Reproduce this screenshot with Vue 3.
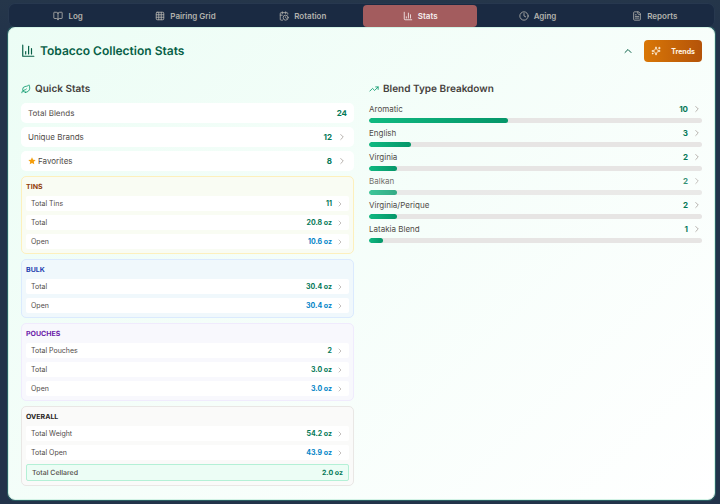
<script setup>
import { ref } from 'vue'

const icons = {
  book: '<path d="M12 7v14"/><path d="M3 18a1 1 0 0 1-1-1V4a1 1 0 0 1 1-1h5a4 4 0 0 1 4 4 4 4 0 0 1 4-4h5a1 1 0 0 1 1 1v13a1 1 0 0 1-1 1h-6a3 3 0 0 0-3 3 3 3 0 0 0-3-3z"/>',
  grid: '<rect width="18" height="18" x="3" y="3" rx="2"/><path d="M3 9h18"/><path d="M3 15h18"/><path d="M9 3v18"/><path d="M15 3v18"/>',
  calendar: '<path d="M21 7.5V6a2 2 0 0 0-2-2H5a2 2 0 0 0-2 2v14a2 2 0 0 0 2 2h3.5"/><path d="M16 2v4"/><path d="M8 2v4"/><path d="M3 10h5"/><path d="M17.5 17.5 16 16.3V14"/><circle cx="16" cy="16" r="6"/>',
  chart: '<path d="M3 3v16a2 2 0 0 0 2 2h16"/><path d="M18 17V9"/><path d="M13 17V5"/><path d="M8 17v-3"/>',
  bars: '<path d="M3 2v19h19"/><path d="M18 17V8"/><path d="M13 17V4"/><path d="M8 17v-4"/>',
  clock: '<circle cx="12" cy="12" r="10"/><path d="M12 6v6l4 2"/>',
  file: '<path d="M15 2H6a2 2 0 0 0-2 2v16a2 2 0 0 0 2 2h12a2 2 0 0 0 2-2V7Z"/><path d="M14 2v4a2 2 0 0 0 2 2h4"/><path d="M10 9H8"/><path d="M16 13H8"/><path d="M16 17H8"/>',
  leaf: '<path d="M11 20A7 7 0 0 1 9.8 6.1C15.5 5 17 4.48 19 2c1 2 2 4.18 2 8 0 5.5-4.78 10-10 10Z"/><path d="M2 21c0-3 1.85-5.36 5.08-6C9.5 14.52 12 13 13 12"/>',
  trend: '<path d="M22 7 13.5 15.5 8.5 10.5 2 17"/><path d="M16 7h6v6"/>',
  sparkles: '<path d="M9.937 15.5A2 2 0 0 0 8.5 14.063l-6.135-1.582a.5.5 0 0 1 0-.962L8.5 9.936A2 2 0 0 0 9.937 8.5l1.582-6.135a.5.5 0 0 1 .963 0L14.063 8.5A2 2 0 0 0 15.5 9.937l6.135 1.581a.5.5 0 0 1 0 .964L15.5 14.063a2 2 0 0 0-1.437 1.437l-1.582 6.135a.5.5 0 0 1-.963 0z"/><path d="M20 3v4"/><path d="M22 5h-4"/><path d="M4 17v2"/><path d="M5 18H3"/>',
  up: '<path d="m18 15-6-6-6 6"/>',
  right: '<path d="m9 18 6-6-6-6"/>',
}

const tabs = [
  { label: 'Log', icon: 'book' },
  { label: 'Pairing Grid', icon: 'grid' },
  { label: 'Rotation', icon: 'calendar' },
  { label: 'Stats', icon: 'chart' },
  { label: 'Aging', icon: 'clock' },
  { label: 'Reports', icon: 'file' },
]
const active = ref('Stats')
const open = ref(true)

const quick = [
  { label: 'Total Blends', value: 24 },
  { label: 'Unique Brands', value: 12, link: true },
  { label: 'Favorites', value: 8, link: true, star: true },
]

const groups = [
  { name: 'Tins', tone: 'amber', rows: [
    { label: 'Total Tins', value: '11' },
    { label: 'Total', value: '20.8 oz' },
    { label: 'Open', value: '10.6 oz', blue: true },
  ] },
  { name: 'Bulk', tone: 'blue', rows: [
    { label: 'Total', value: '30.4 oz' },
    { label: 'Open', value: '30.4 oz', blue: true },
  ] },
  { name: 'Pouches', tone: 'purple', rows: [
    { label: 'Total Pouches', value: '2' },
    { label: 'Total', value: '3.0 oz' },
    { label: 'Open', value: '3.0 oz', blue: true },
  ] },
  { name: 'Overall', tone: 'stone', rows: [
    { label: 'Total Weight', value: '54.2 oz' },
    { label: 'Total Open', value: '43.9 oz', blue: true },
    { label: 'Total Cellared', value: '2.0 oz', cellared: true },
  ] },
]

const total = 24
const blends = [
  { label: 'Aromatic', count: 10 },
  { label: 'English', count: 3 },
  { label: 'Virginia', count: 2 },
  { label: 'Balkan', count: 2, dim: true },
  { label: 'Virginia/Perique', count: 2 },
  { label: 'Latakia Blend', count: 1 },
]
</script>

<template>
  <main class="page">
    <nav class="tabs">
      <button
        v-for="t in tabs"
        :key="t.label"
        class="tab"
        :class="{ active: active === t.label }"
        @click="active = t.label"
      >
        <svg class="icon i10" viewBox="0 0 24 24" v-html="icons[t.icon]" />
        <span>{{ t.label }}</span>
      </button>
    </nav>

    <section class="card">
      <header class="head">
        <svg class="icon i14" viewBox="0 0 24 24" v-html="icons.bars" />
        <h1>Tobacco Collection Stats</h1>
        <button class="toggle" aria-label="Toggle stats" @click="open = !open">
          <svg class="icon i12" viewBox="0 0 24 24" v-html="icons.up" />
        </button>
        <button class="trends">
          <svg class="icon i10" viewBox="0 0 24 24" v-html="icons.sparkles" />
          <span>Trends</span>
        </button>
      </header>

      <div v-if="open" class="columns">
        <div class="column">
          <h2>
            <svg class="icon i10" viewBox="0 0 24 24" v-html="icons.leaf" />
            Quick Stats
          </h2>
          <div class="quick">
            <component
              :is="q.link ? 'button' : 'div'"
              v-for="q in quick"
              :key="q.label"
              class="row"
            >
              <svg v-if="q.star" class="star" viewBox="0 0 24 24">
                <path d="M12 1l3.300 7 7.700.9-5.700 5.200 1.500 7.600L12 17.900l-6.800 3.800 1.500-7.600L1 8.900 8.700 8z" />
              </svg>
              <span class="label">{{ q.label }}</span>
              <b>{{ q.value }}</b>
              <svg v-if="q.link" class="icon chevron i10" viewBox="0 0 24 24" v-html="icons.right" />
            </component>
          </div>

          <div class="groups">
            <section v-for="g in groups" :key="g.name" class="group" :class="g.tone">
              <h3>{{ g.name }}</h3>
              <div class="lines">
                <component
                  :is="r.cellared ? 'div' : 'button'"
                  v-for="r in g.rows"
                  :key="r.label"
                  class="line"
                  :class="{ sky: r.blue, cellared: r.cellared }"
                >
                  <span class="label">{{ r.label }}</span>
                  <b>{{ r.value }}</b>
                  <svg v-if="!r.cellared" class="icon chevron i8" viewBox="0 0 24 24" v-html="icons.right" />
                </component>
              </div>
            </section>
          </div>
        </div>

        <div class="column">
          <h2>
            <svg class="icon i10" viewBox="0 0 24 24" v-html="icons.trend" />
            Blend Type Breakdown
          </h2>
          <div class="blends">
            <button v-for="b in blends" :key="b.label" class="blend" :class="{ dim: b.dim }">
              <span class="blend-top">
                <span class="label">{{ b.label }}</span>
                <b>{{ b.count }}</b>
                <svg class="icon chevron i10" viewBox="0 0 24 24" v-html="icons.right" />
              </span>
              <span class="track">
                <span class="fill" :style="{ width: (b.count / total) * 100 + '%' }"></span>
              </span>
            </button>
          </div>
        </div>
      </div>
    </section>
  </main>
</template>

<style>
body {
  background: #22334a;
}
</style>

<style scoped>
* {
  box-sizing: border-box;
}
.page {
  min-height: 100vh;
  padding: 3px 5px 4px 8px;
  background: linear-gradient(#25364a, #22334a 8%, #22334a);
  font-family: Inter, "Liberation Sans", sans-serif;
  text-rendering: geometricPrecision;
  color: #504b47;
}
h1,
h2,
h3 {
  margin: 0;
}
button {
  margin: 0;
  padding: 0;
  border: 0;
  background: none;
  color: inherit;
  font: inherit;
  text-align: left;
  cursor: pointer;
}
.icon {
  flex: none;
  fill: none;
  stroke: currentColor;
  stroke-width: 2;
  stroke-linecap: round;
  stroke-linejoin: round;
}
.i8 {
  width: 8px;
  height: 8px;
}
.i10 {
  width: 10px;
  height: 10px;
}
.i12 {
  width: 12px;
  height: 12px;
}
.i14 {
  width: 14px;
  height: 14px;
}

.tabs {
  position: relative;
  z-index: 1;
  display: grid;
  grid-template-columns: repeat(6, 1fr);
  gap: 3px;
  height: 24px;
  padding: 1px 2px 0;
  border: 1px solid #27384f;
  border-bottom: 0;
  border-radius: 7px;
  background: #1a2a42;
}
.tab {
  display: flex;
  align-items: center;
  justify-content: center;
  gap: 5px;
  height: 22px;
  border-radius: 4px;
  color: #b3b2ad;
  font-size: 8px;
  font-weight: 600;
}
.tab.active {
  background: #a35c5e;
  color: #f6eeee;
}

.card {
  padding: 12px 12px 13px;
  border: 1px solid #d3f3e6;
  border-radius: 7px;
  background: linear-gradient(135deg, #ecfdf5, #fff);
  box-shadow: 0 0 0 1px #2b5f63;
}
.head {
  display: flex;
  align-items: center;
  height: 22px;
  color: #065f46;
}
h1 {
  flex: 1;
  margin-left: 5px;
  font-size: 12px;
  font-weight: 600;
  line-height: 14px;
}
.toggle {
  display: flex;
  margin-right: 10px;
}
.trends {
  display: flex;
  align-items: center;
  justify-content: space-between;
  width: 58px;
  height: 22px;
  padding: 0 7px;
  border-radius: 4px;
  background: linear-gradient(90deg, #d97706, #b45309);
  color: #fff5e6;
  font-size: 7px;
  font-weight: 700;
}

.columns {
  display: grid;
  grid-template-columns: 1fr 1fr;
  gap: 15px;
  margin-top: 19px;
}
h2 {
  display: flex;
  align-items: center;
  gap: 4px;
  height: 16px;
  color: #44403c;
  font-size: 10px;
  font-weight: 600;
  line-height: 14px;
}
h2 .icon {
  color: #059669;
}
.quick {
  display: grid;
  gap: 4px;
  margin-top: 6px;
}
.label {
  flex: 1;
}
b {
  color: #047857;
  font-weight: 700;
}
.chevron {
  color: #a8a29e;
}
.row {
  display: flex;
  align-items: center;
  height: 20px;
  padding: 0 7px;
  border-radius: 5px;
  background: #fff;
  font-size: 8px;
}
.row .chevron {
  margin-left: 5px;
}
.star {
  width: 8px;
  height: 8px;
  margin-right: 2px;
  fill: #f59e0b;
}

.groups {
  display: grid;
  gap: 5px;
  margin-top: 5px;
}
.group {
  padding: 4px;
  border: 1px solid;
  border-radius: 5px;
}
.group h3 {
  height: 15px;
  font-size: 7px;
  font-weight: 700;
  line-height: 11px;
  text-transform: uppercase;
}
.amber {
  border-color: #fdf0bd;
  background: #f9fcf3;
}
.amber h3 {
  color: #92400e;
}
.blue {
  border-color: #dbeafe;
  background: #f0f8fc;
}
.blue h3 {
  color: #1e40af;
}
.purple {
  border-color: #f0ebfd;
  background: #f8f8fd;
}
.purple h3 {
  color: #6b21a8;
}
.stone {
  border-color: #e9e7e5;
  background: #fafaf9;
}
.stone h3 {
  color: #292524;
}
.lines {
  display: grid;
  gap: 4px;
}
.line {
  display: flex;
  align-items: center;
  height: 15px;
  padding: 0 5px;
  border-radius: 2px;
  background: #fff;
  font-size: 7px;
}
.line .chevron {
  margin-left: 4px;
}
.sky b {
  color: #0284c7;
}
.cellared {
  height: 17px;
  border: 1px solid #b4f0d6;
  background: #ecfdf5;
  font-weight: 500;
}

.blends {
  display: grid;
  gap: 3px;
  margin-top: 5px;
}
.blend {
  display: grid;
  gap: 2px;
  width: 100%;
}
.blend-top {
  display: flex;
  align-items: center;
  height: 14px;
  font-size: 8px;
}
.blend-top .chevron {
  margin-left: 4px;
}
.track {
  height: 5px;
  border-radius: 3px;
  background: #e7e5e4;
  overflow: hidden;
}
.fill {
  display: block;
  height: 100%;
  border-radius: 3px;
  background: linear-gradient(90deg, #10b981, #059669);
}
.dim {
  opacity: 0.8;
}
</style>
